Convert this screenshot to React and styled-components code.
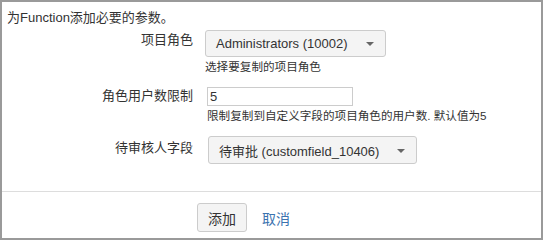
import React from 'react';
import styled, { createGlobalStyle } from 'styled-components';

const Global = createGlobalStyle`
  html, body { margin: 0; padding: 0; background: #fff; }
  body {
    font-family: "Liberation Sans", Arial, "Noto Sans CJK SC", sans-serif;
    color: #333;
  }
`;

const Frame = styled.div`
  width: 543px;
  height: 240px;
  box-sizing: border-box;
  border: 2px solid #9a9a9a;
  display: flex;
  flex-direction: column;
  background: #fff;
`;

const Intro = styled.p`
  margin: 8px 0 0 5px;
  font-size: 13px;
  line-height: 16px;
`;

const Row = styled.div`
  display: flex;
  align-items: flex-start;
  margin-top: ${p => p.$top}px;
`;

const Label = styled.div`
  width: 191px;
  flex: none;
  text-align: right;
  font-size: 13px;
  line-height: 16px;
  padding-top: ${p => p.$pad}px;
`;

const Field = styled.div`
  display: flex;
  flex-direction: column;
  align-items: flex-start;
  margin-left: ${p => p.$offset}px;
`;

const Select = styled.div`
  display: inline-flex;
  align-items: center;
  gap: 18px;
  box-sizing: border-box;
  height: ${p => p.$h}px;
  padding: 0 11px 0 10px;
  background: #f4f4f4;
  border: 1px solid #ccc;
  border-radius: 3px;
  font-size: 13px;
  color: #333;
`;

const Caret = styled.span`
  width: 0;
  height: 0;
  border-left: 4px solid transparent;
  border-right: 4px solid transparent;
  border-top: 4px solid #666;
  margin-top: 1px;
`;

const TextInput = styled.input`
  box-sizing: border-box;
  width: 146px;
  height: 19px;
  border: 1px solid #ccc;
  border-radius: 0;
  padding: 0 2px;
  font-family: inherit;
  font-size: 13px;
  color: #333;
  outline: none;
`;

const Hint = styled.div`
  margin-top: 2px;
  font-size: 11.6px;
  line-height: 16px;
  color: #333;
  white-space: nowrap;
`;

const Footer = styled.div`
  margin-top: 27px;
  border-top: 1px solid #ddd;
  padding: 11px 0 0 195px;
  display: flex;
  align-items: center;
  gap: 15px;
`;

const Button = styled.button`
  box-sizing: border-box;
  height: 29px;
  padding: 0 10px;
  background: #f4f4f4;
  border: 1px solid #ccc;
  border-radius: 3px;
  font-family: inherit;
  font-size: 14px;
  color: #333;
`;

const CancelLink = styled.a`
  font-size: 14px;
  color: #3b73af;
  text-decoration: none;
  cursor: pointer;
`;

export default function App() {
  return (
    <>
      <Global />
      <Frame>
        <Intro>为Function添加必要的参数。</Intro>
        <Row $top={4}>
          <Label $pad={2}>项目角色</Label>
          <Field $offset={12}>
            <Select $h={27}>
              <span>Administrators (10002)</span>
              <Caret />
            </Select>
            <Hint>选择要复制的项目角色</Hint>
          </Field>
        </Row>
        <Row $top={12}>
          <Label $pad={1}>角色用户数限制</Label>
          <Field $offset={14}>
            <TextInput readOnly value="5" />
            <Hint>限制复制到自定义字段的项目角色的用户数. 默认值为5</Hint>
          </Field>
        </Row>
        <Row $top={12}>
          <Label $pad={4}>待审核人字段</Label>
          <Field $offset={15}>
            <Select $h={28}>
              <span>待审批 (customfield_10406)</span>
              <Caret />
            </Select>
          </Field>
        </Row>
        <Footer>
          <Button>添加</Button>
          <CancelLink>取消</CancelLink>
        </Footer>
      </Frame>
    </>
  );
}
